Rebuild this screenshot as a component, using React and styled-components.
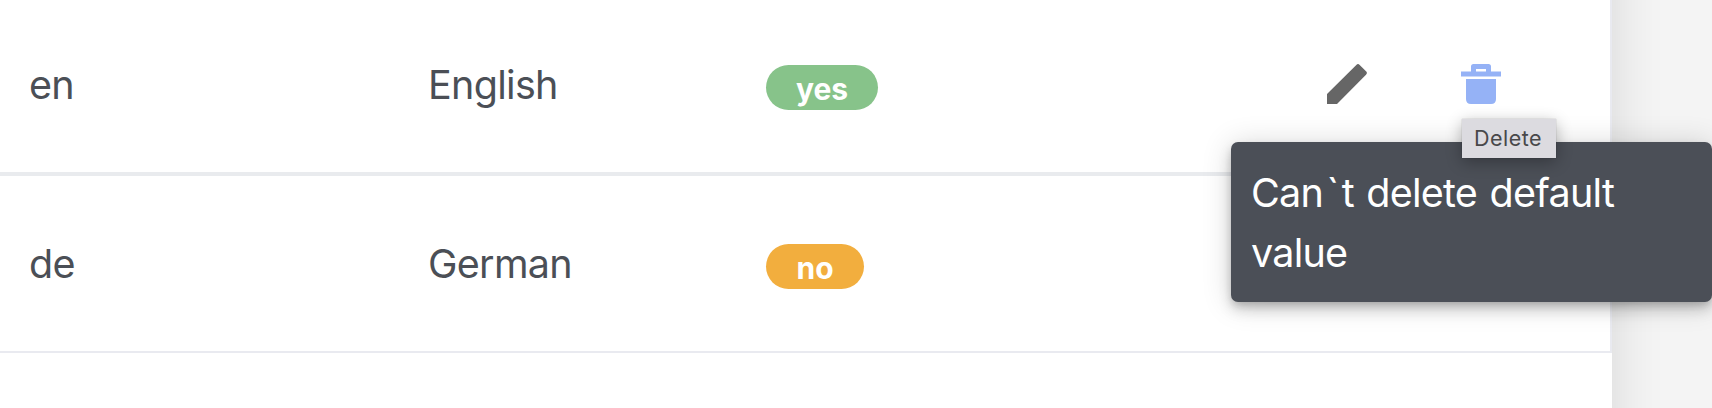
import React from "react";
import styled, { createGlobalStyle } from "styled-components";

const GlobalStyle = createGlobalStyle`
  * { box-sizing: border-box; }
  body {
    margin: 0;
    overflow: hidden;
    background: #f4f4f4;
    color: #4b4f56;
    font-family: Inter, "Liberation Sans", sans-serif;
  }
`;

const Page = styled.main`
  position: relative;
  display: flex;
  align-items: center;
  height: 408px;
  overflow: hidden;
`;

const Card = styled.section`
  display: flow-root;
  flex: none;
  width: 1612px;
  height: 560px;
  padding-top: 73px;
  background: #fff;
  box-shadow: 0 0 50px rgba(0, 0, 0, 0.12);
`;

const Table = styled.div`
  border-right: 2px solid #e9eaf0;
  border-bottom: 2px solid #e9eaf0;
`;

const Row = styled.div`
  display: grid;
  grid-template-columns: 428px 338px 1fr 134px 149px;
  align-items: center;
  height: 175px;
  & + & {
    height: 179px;
    border-top: 4px solid #e9ebee;
  }
`;

const Cell = styled.div`
  padding-left: ${({ $indent }) => $indent || 0}px;
  padding-top: 1px;
  font-size: 39.5px;
  line-height: 48px;
  letter-spacing: -0.7px;
`;

const StatusCell = styled.div`
  display: flex;
  padding-top: 6px;
`;

const Badge = styled.span`
  display: flex;
  align-items: center;
  justify-content: center;
  width: ${({ $width }) => $width}px;
  height: 45px;
  padding-top: 2px;
  border-radius: 23px;
  background: ${({ $color }) => $color};
  color: #fff;
  font-size: 30px;
  font-weight: 700;
`;

const IconButton = styled.button`
  display: flex;
  width: 40px;
  height: 40px;
  margin-bottom: 1px;
  padding: 0;
  border: 0;
  background: none;
  color: ${({ $color }) => $color};
`;

const Tooltip = styled.div`
  position: absolute;
  left: 1231px;
  top: 142px;
  width: 481px;
  height: 160px;
  padding: 21px 40px 19px 20px;
  border-radius: 7px;
  background: #4b4f57;
  color: #fff;
  font-size: 39.5px;
  line-height: 60px;
  letter-spacing: -0.75px;
  word-spacing: 2px;
  box-shadow: 0 4px 8px -2px rgba(0, 0, 0, 0.2), 0 8px 14px rgba(0, 0, 0, 0.14),
    0 2px 30px rgba(0, 0, 0, 0.16);
`;

const TooltipLine = styled.div`
  white-space: nowrap;
`;

const Tick = styled.span`
  margin: 0 3.3px;
`;

const NativeTitle = styled.div`
  position: absolute;
  left: 1462px;
  top: 119px;
  width: 94px;
  height: 39px;
  padding-left: 12px;
  background: #dcdbe0;
  color: #48484a;
  font-size: 21.5px;
  line-height: 39px;
  letter-spacing: 0.5px;
  box-shadow: 0 0 1px rgba(0, 0, 0, 0.3), 0 4px 16px rgba(0, 0, 0, 0.3);
`;

const PencilIcon = () => (
  <svg width="40" height="40" viewBox="0 0 40 40" fill="currentColor">
    <path d="M0 30 29.3 1Q31 -.8 32.7 1L39 7.3Q40.8 9 39 10.7L10 40H0Z" />
  </svg>
);

const TrashIcon = () => (
  <svg width="40" height="40" viewBox="0 0 40 40" fill="currentColor">
    <path
      fillRule="evenodd"
      d="M10 7.5V2.5Q10 0 12.5 0H27.5Q30 0 30 2.5V7.5H40V12.5H0V7.5ZM15 5V7.5H25V5Z"
    />
    <path d="M5 15H35V35Q35 40 30 40H10Q5 40 5 35Z" />
  </svg>
);

const languages = [
  { code: "en", name: "English", label: "yes", color: "#87c38a", width: 112, actions: true },
  { code: "de", name: "German", label: "no", color: "#f2ae3e", width: 98, actions: false },
];

export default function App() {
  return (
    <Page>
      <GlobalStyle />
      <Card>
        <Table>
          {languages.map((lang) => (
            <Row key={lang.code}>
              <Cell $indent={29}>{lang.code}</Cell>
              <Cell>{lang.name}</Cell>
              <StatusCell>
                <Badge $color={lang.color} $width={lang.width}>
                  {lang.label}
                </Badge>
              </StatusCell>
              {lang.actions && (
                <>
                  <IconButton $color="#666" aria-label="Edit">
                    <PencilIcon />
                  </IconButton>
                  <IconButton $color="#95b2f6" aria-label="Delete">
                    <TrashIcon />
                  </IconButton>
                </>
              )}
            </Row>
          ))}
        </Table>
      </Card>
      <Tooltip role="tooltip">
        <TooltipLine>
          Can<Tick>`</Tick>t delete default
        </TooltipLine>
        <TooltipLine>value</TooltipLine>
      </Tooltip>
      <NativeTitle>Delete</NativeTitle>
    </Page>
  );
}
